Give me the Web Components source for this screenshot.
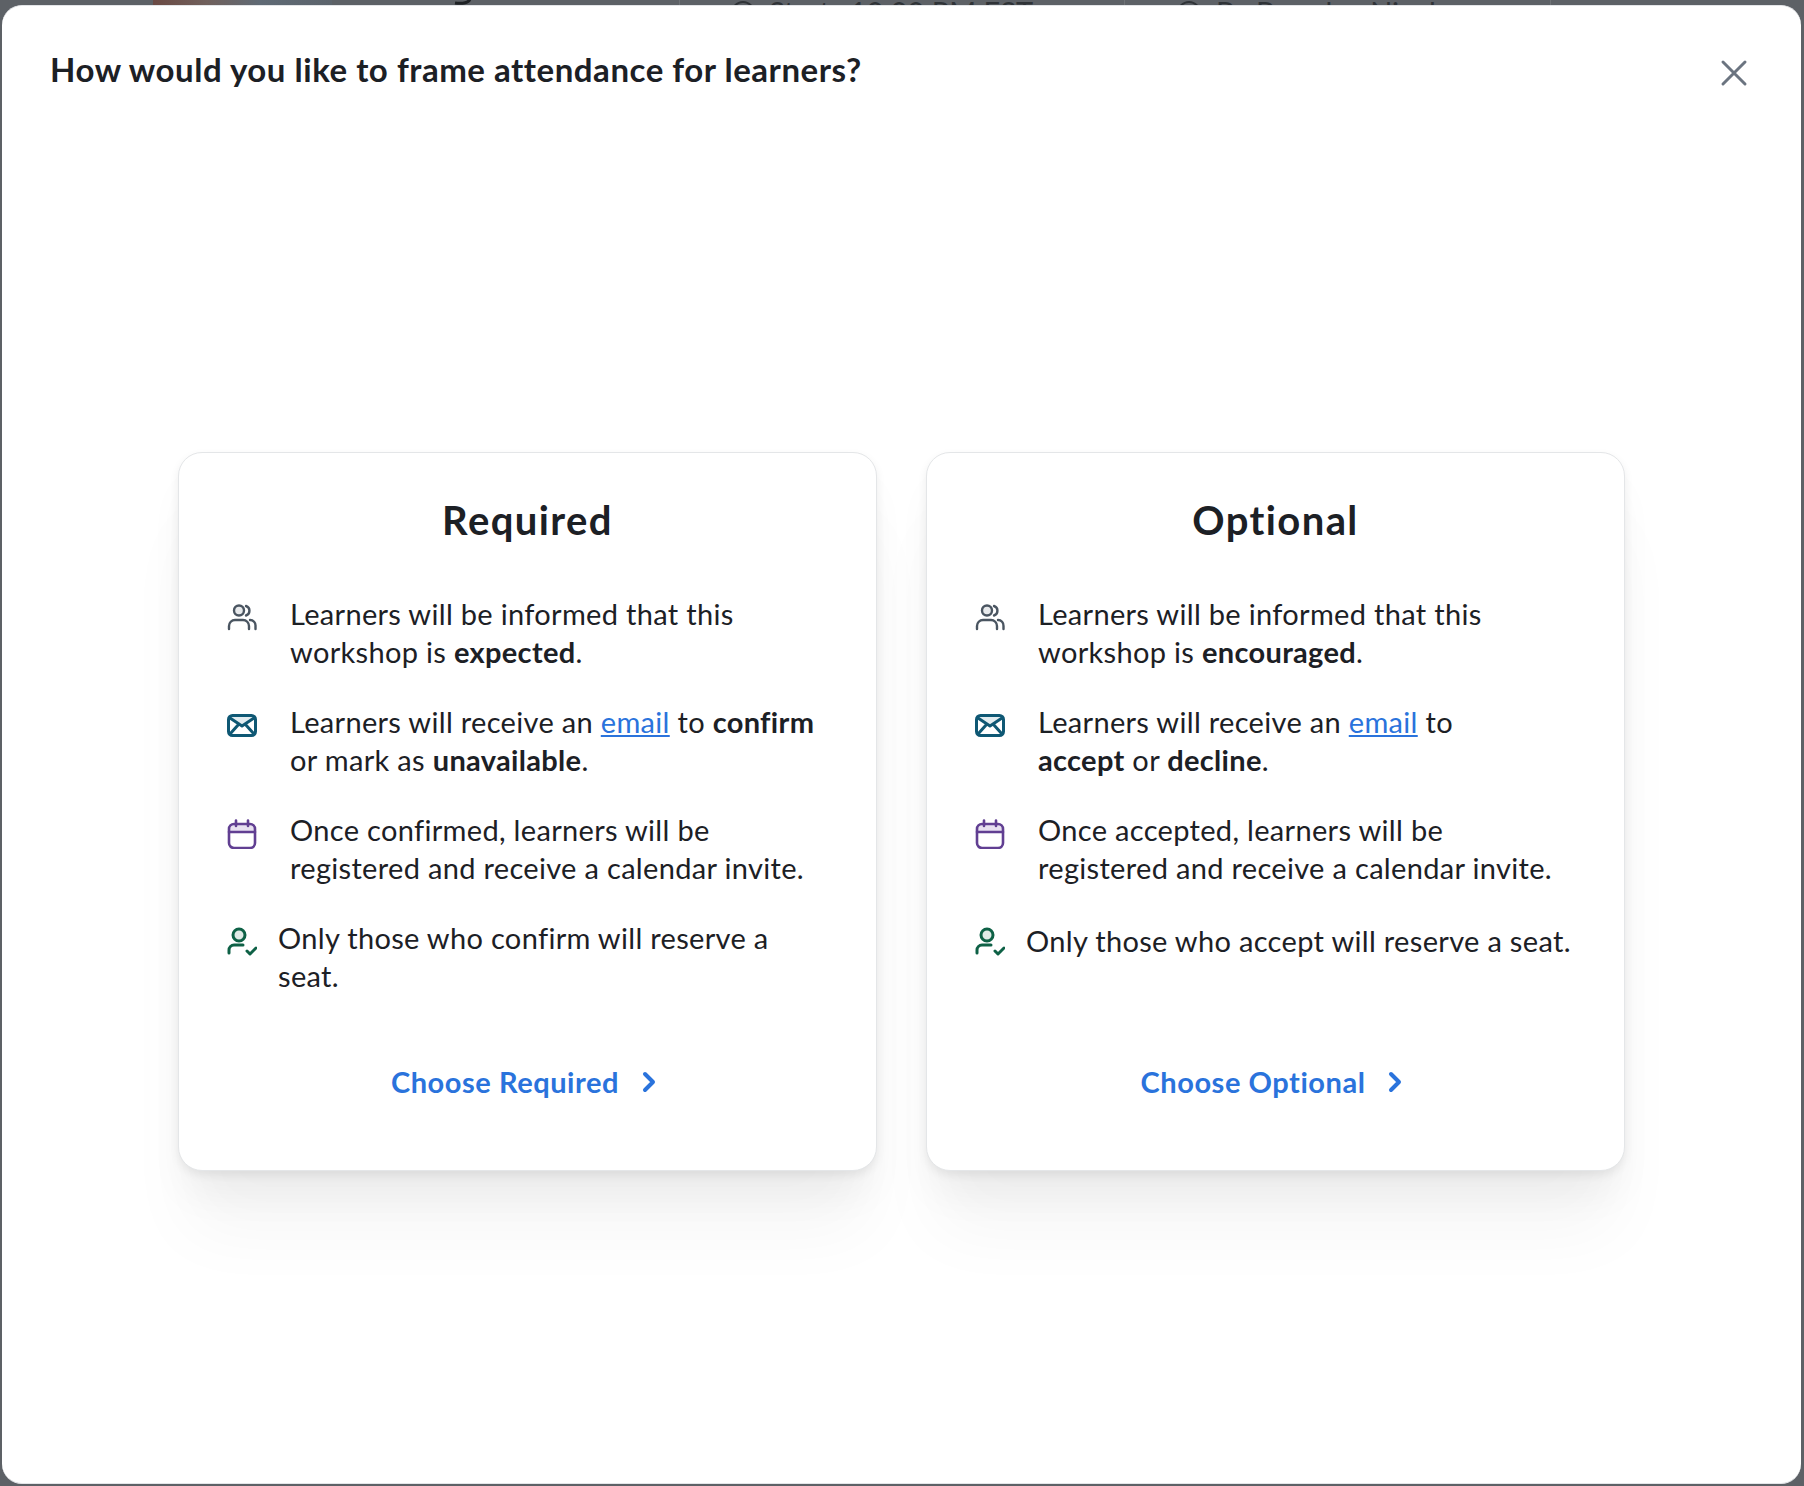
<!DOCTYPE html>
<html>
<head>
<meta charset="utf-8">
<title>Attendance</title>
<style>
	html, body { margin: 0; height: 100%; }
	body { background: #5d6166; font-family: Lato, "Liberation Sans", sans-serif; overflow: hidden; }
</style>
</head>
<body>
<template id="tpl-fondo">
	<style>
		:host { display: flex; height: 5px; overflow: hidden; color: #2f3337; font-size: 29px; line-height: 24px; white-space: nowrap; }
		.foto { flex: none; width: 179px; margin-left: 153px; background: linear-gradient(90deg, #6b4a44 0, #70605c 30%, #5f6a75 60%, #5c646c 100%); }
		.hueco { flex: none; }
		.linea { flex: none; width: 1px; background: #6e7276; }
		.texto { flex: none; }
		svg { display: block; flex: none; }
	</style>
	<div class="foto"></div>
	<div class="hueco" style="width:122px"></div>
	<svg width="18" height="5" viewBox="0 0 18 5" fill="none" stroke="#1f2225" stroke-width="3"><path d="M16 -2 C16 3 8 4 1 3"/></svg>
	<div class="hueco" style="width:207px"></div>
	<div class="linea"></div>
	<div class="hueco" style="width:49px"></div>
	<svg width="40" height="5" viewBox="0 0 40 5" fill="none" stroke="#2f3337" stroke-width="2"><circle cx="14" cy="13" r="11"/></svg>
	<div class="texto" style="width:355px"><slot name="inicio"></slot></div>
	<div class="linea"></div>
	<div class="hueco" style="width:51px"></div>
	<svg width="40" height="5" viewBox="0 0 40 5" fill="none" stroke="#2f3337" stroke-width="2"><circle cx="13" cy="13" r="11"/></svg>
	<div class="texto" style="width:334px"><slot name="autor"></slot></div>
	<div class="linea"></div>
</template>

<template id="tpl-dialog">
	<style>
		:host { display: flex; flex-direction: column; box-sizing: border-box; width: 1799px; height: 1479px; margin-left: 2px; background: #fff; border-radius: 20px; border-top: 1px solid #e3e5e8; border-bottom: 1px solid #e3e5e8; padding: 0 48px; color: #1c2025; }
		header { display: flex; justify-content: space-between; align-items: flex-start; padding-top: 40px; height: 400px; box-sizing: border-box; flex: none; }
		h1 { margin: 0; font-size: 33px; line-height: 46px; font-weight: 700; letter-spacing: .53px; }
		button { border: 0; background: none; padding: 0; margin: 13px 5px 0 0; width: 28px; height: 28px; color: #6b7480; }
		svg { display: block; }
		.cuerpo { display: flex; justify-content: center; gap: 49px; padding-top: 46px; }
	</style>
	<header>
		<h1><slot name="titulo"></slot></h1>
		<button aria-label="Close"><svg width="28" height="28" viewBox="0 0 28 28" fill="none" stroke="currentColor" stroke-width="3" stroke-linecap="round"><path d="M3 3 L25 25 M25 3 L3 25"/></svg></button>
	</header>
	<div class="cuerpo"><slot></slot></div>
</template>

<template id="tpl-card">
	<style>
		:host { display: flex; flex-direction: column; box-sizing: border-box; width: 699px; height: 719px; background: #fff; border: 1px solid #e4e6e8; border-radius: 24px; box-shadow: 0 4px 10px rgba(0,0,0,.07), 0 30px 40px -8px rgba(0,0,0,.05), 0 70px 70px -10px rgba(0,0,0,.04); padding: 0 48px; }
		h2 { margin: 43px 0 0; text-align: center; font-size: 40px; line-height: 48px; font-weight: 700; letter-spacing: 1.4px; color: #1c2025; }
		.lista { display: flex; flex-direction: column; gap: 32px; margin-top: 51px; height: 390px; }
		a { margin-top: auto; margin-bottom: 69px; padding-right: 7px; display: flex; justify-content: center; align-items: center; gap: 22px; color: #2a73dc; font-size: 29px; line-height: 38px; font-weight: 700; letter-spacing: .55px; text-decoration: none; }
		svg { display: block; }
	</style>
	<h2><slot name="titulo"></slot></h2>
	<div class="lista"><slot></slot></div>
	<a href="#"><span><slot name="accion"></slot></span><svg width="16" height="22" viewBox="0 0 16 22" fill="none" stroke="currentColor" stroke-width="4" stroke-linecap="round" stroke-linejoin="round"><path d="M4 3 L12 11 L4 19"/></svg></a>
</template>

<template id="tpl-fila">
	<style>
		:host { display: flex; align-items: flex-start; font-size: 29px; line-height: 38px; color: #1c2025; letter-spacing: .32px; }
		.icono { flex: none; width: 30px; height: 30px; margin-top: 8px; }
		.texto { margin-left: 33px; }
		:host([compacta]) .texto { margin-left: 21px; }
		:host([centrada]) .texto { margin-top: 3px; }
		::slotted(a) { color: #2a73dc; }
	</style>
	<span class="icono"></span>
	<div class="texto"><slot></slot></div>
</template>

<script>
const ICONOS = {
	gente: `<svg width="30" height="30" viewBox="0 0 30 30" fill="none" stroke="#4a5561" stroke-width="2.4" stroke-linecap="round"><circle cx="12" cy="7.5" r="5" fill="#e8eaec"/><path d="M19 3 a5 5 0 0 1 0 9.5"/><path d="M2 26 v-3 a6 6 0 0 1 6 -6 h8 a6 6 0 0 1 6 6 v3"/><path d="M23 17 a5.5 5.5 0 0 1 5.5 6 v3"/></svg>`,
	correo: `<svg width="30" height="30" viewBox="0 0 30 30" fill="none" stroke="#0f5874" stroke-width="3" stroke-linecap="round" stroke-linejoin="round"><path d="M3 6 H27 L15 16 Z" fill="#e2ecf0" stroke="none"/><rect x="1.5" y="4.5" width="27" height="20" rx="4"/><path d="M3 7 L15 15 L27 7 M3 23 L11.5 13.5 M27 23 L18.5 13.5"/></svg>`,
	calendario: `<svg width="30" height="30" viewBox="0 0 30 30" fill="none" stroke="#613f92" stroke-width="2.6" stroke-linecap="round"><path d="M5 5 h20 a3 3 0 0 1 3 3 v5 H2 v-5 a3 3 0 0 1 3 -3 z" fill="#e7e0f0" stroke="none"/><rect x="2" y="5" width="26" height="24" rx="5"/><path d="M2 13 H28 M9 1.5 V7 M21 1.5 V7"/></svg>`,
	persona: `<svg width="30" height="30" viewBox="0 0 30 30" fill="none" stroke="#0e6146" stroke-width="3" stroke-linecap="round" stroke-linejoin="round"><circle cx="12" cy="8" r="6" fill="#e0ebe7"/><path d="M2 26 v-3 a5 5 0 0 1 5 -5 h9"/><path d="M20 24 l3 3 l6 -6"/></svg>`
};

class AttBase extends HTMLElement {
	constructor(idTemplate) {
		super();
		this.attachShadow({mode: 'open'}).append(document.querySelector(idTemplate).content.cloneNode(true));
	}
}

class AttFondo extends AttBase {
	constructor() { super('#tpl-fondo'); }
}

class AttDialogo extends AttBase {
	constructor() { super('#tpl-dialog'); }
}

class AttTarjeta extends AttBase {
	constructor() { super('#tpl-card'); }
}

class AttFila extends AttBase {
	constructor() { super('#tpl-fila'); }

	connectedCallback() {
		this.shadowRoot.querySelector('.icono').innerHTML = ICONOS[this.getAttribute('icono')] || '';
	}
}

customElements.define('att-fondo', AttFondo);
customElements.define('att-dialogo', AttDialogo);
customElements.define('att-tarjeta', AttTarjeta);
customElements.define('att-fila', AttFila);
</script>

<att-fondo>
	<span slot="inicio">Starts 10:00 PM EST</span>
	<span slot="autor">By Brendan Nicol</span>
</att-fondo>
<att-dialogo>
	<span slot="titulo">How would you like to frame attendance for learners?</span>
	<att-tarjeta>
		<span slot="titulo">Required</span>
		<att-fila icono="gente">Learners will be informed that this<br>workshop is <b>expected</b>.</att-fila>
		<att-fila icono="correo">Learners will receive an <a href="#">email</a> to <b>confirm</b><br>or mark as <b>unavailable</b>.</att-fila>
		<att-fila icono="calendario">Once confirmed, learners will be<br>registered and receive a calendar invite.</att-fila>
		<att-fila icono="persona" compacta>Only those who confirm will reserve a<br>seat.</att-fila>
		<span slot="accion">Choose Required</span>
	</att-tarjeta>
	<att-tarjeta>
		<span slot="titulo">Optional</span>
		<att-fila icono="gente">Learners will be informed that this<br>workshop is <b>encouraged</b>.</att-fila>
		<att-fila icono="correo">Learners will receive an <a href="#">email</a> to<br><b>accept</b> or <b>decline</b>.</att-fila>
		<att-fila icono="calendario">Once accepted, learners will be<br>registered and receive a calendar invite.</att-fila>
		<att-fila icono="persona" compacta centrada>Only those who accept will reserve a seat.</att-fila>
		<span slot="accion">Choose Optional</span>
	</att-tarjeta>
</att-dialogo>
</body>
</html>
